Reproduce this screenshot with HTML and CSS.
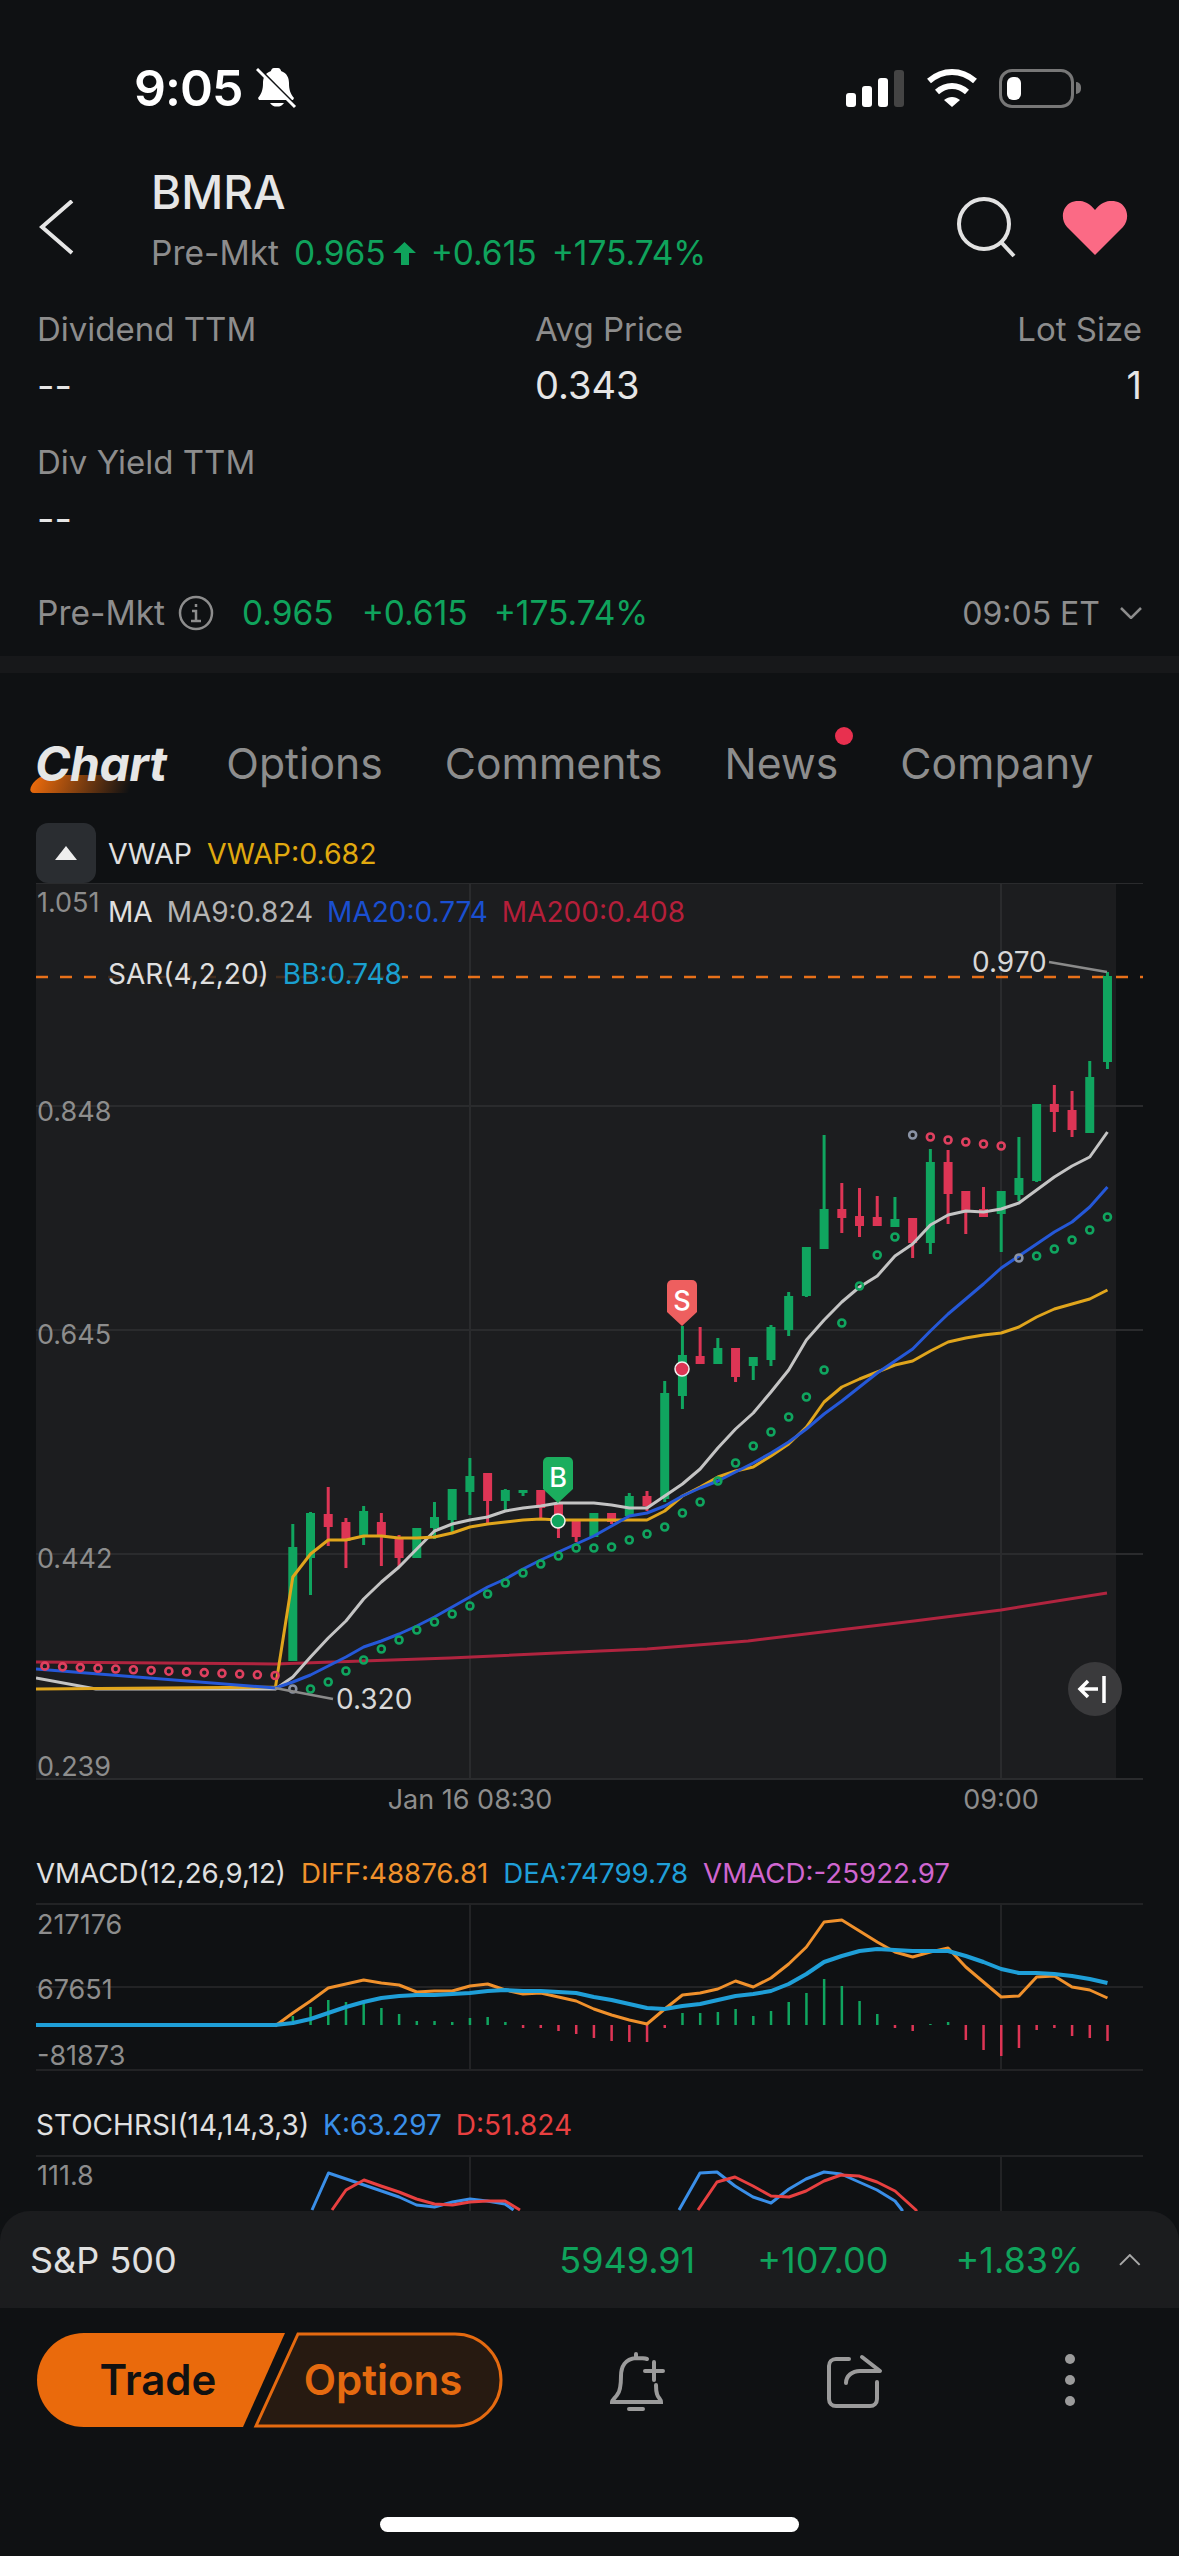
FILE: index.html
```html
<!DOCTYPE html>
<html>
<head>
  <meta charset="utf-8">
  <title>BMRA</title>
  <link rel="stylesheet" href="styles.css">
</head>
<body>
  <div id="screen">
    <div class="status">
      <div class="status-left">
        <span class="clock">9:05</span>
        <svg class="status-bell" viewBox="255 66 42 44">
          <path d="M273 68c-2 0-3 2-3 3-6 2-8 7-8 12 0 6-1 10-5 15l1 2h34l1-2c-4-5-5-9-5-15 0-5-2-10-8-12 0-1-1-3-3-3h-4z" fill="#fff"/>
          <path d="M267 103a8 7 0 0 0 14 0z" fill="#fff" transform="translate(2 0)"/>
          <path d="M254 65l40 40" stroke="#0f1113" stroke-width="3"/>
          <path d="M256 69l38 38" stroke="#fff" stroke-width="3"/>
        </svg>
      </div>
      <div class="status-right">
        <div class="signal">
          <i class="bar-1"></i><i class="bar-2"></i><i class="bar-3"></i><i class="bar-4"></i>
        </div>
        <svg class="wifi" viewBox="925 68 54 40">
          <path d="M929 81c14-12 32-12 46 0M937 92c9-8 21-8 30 0" fill="none" stroke="#fff" stroke-width="6"/>
          <path d="M944 100c5-4 11-4 16 0l-8 7z" fill="#fff"/>
        </svg>
        <div class="battery"><div class="battery-fill"></div></div>
        <div class="battery-nub"></div>
      </div>
    </div>

    <div class="header">
      <svg class="back" viewBox="0 0 35 55"><path d="M33 1L3 27l30 26" fill="none" stroke="#e6e6e6" stroke-width="4"/></svg>
      <div class="title">
        <div class="symbol">BMRA</div>
        <div class="quote">
          <span class="muted">Pre-Mkt</span>
          <span class="up q-price">0.965</span>
          <svg class="up-arrow" viewBox="0 0 23 23"><path d="M11.5 0L23 11h-7v12H8V11H0z" fill="#0fa35c"/></svg>
          <span class="up q-chg">+0.615</span>
          <span class="up">+175.74%</span>
        </div>
      </div>
      <svg class="search" viewBox="0 0 60 62">
        <circle cx="27" cy="27" r="25" fill="none" stroke="#e2e2e2" stroke-width="4"/>
        <path d="M44 45l13 14" stroke="#e2e2e2" stroke-width="4"/>
      </svg>
      <svg class="heart" viewBox="0 0 66 54">
        <path d="M33 54L5 26C-2 18 0 5 10 1c8-3 17 0 23 8 6-8 15-11 23-8 10 4 12 17 5 25z" fill="#fb6a85"/>
      </svg>
    </div>

    <div class="stats">
      <div class="stat">
        <div class="stat-label">Dividend TTM</div>
        <div class="stat-value">--</div>
      </div>
      <div class="stat">
        <div class="stat-label">Avg Price</div>
        <div class="stat-value">0.343</div>
      </div>
      <div class="stat stat-right">
        <div class="stat-label">Lot Size</div>
        <div class="stat-value">1</div>
      </div>
      <div class="stat">
        <div class="stat-label">Div Yield TTM</div>
        <div class="stat-value">--</div>
      </div>
    </div>

    <div class="premkt">
      <span class="muted">Pre-Mkt</span>
      <svg class="info" viewBox="0 0 36 36">
        <circle cx="18" cy="18" r="16" fill="none" stroke="#8d8d8d" stroke-width="2.5"/>
        <path d="M18 9v3M14 16h4v10M13 26h10" fill="none" stroke="#8d8d8d" stroke-width="2.5"/>
      </svg>
      <span class="up p-price">0.965</span>
      <span class="up p-chg">+0.615</span>
      <span class="up p-pct">+175.74%</span>
      <span class="muted p-time">09:05 ET</span>
      <svg class="p-chevron" viewBox="0 0 22 12"><path d="M1 1l10 10L21 1" fill="none" stroke="#8d8d8d" stroke-width="2.5"/></svg>
    </div>

    <div class="band"></div>

    <div class="tabs">
      <span class="tab tab-active">Chart</span>
      <span class="tab">Options</span>
      <span class="tab">Comments</span>
      <span class="tab tab-news">News</span>
      <span class="tab">Company</span>
    </div>

    <div class="legend-top">
      <div class="collapse"><div class="collapse-tri"></div></div>
      <span class="lg-name">VWAP</span>
      <span class="c-vwap">VWAP:0.682</span>
    </div>

    <div class="plot">
      <svg id="main-chart" class="chart-svg" width="1107" height="936" viewBox="36 884 1107 936">
        <rect x="36" y="884" width="1080" height="896" fill="#1c1d1f"/>
        <g stroke="#2a2b2d" stroke-width="2">
          <path d="M36 884H1143M36 1107H1143M36 1331H1143M36 1555H1143M36 1780H1143M470 884V1780M1001 884V1780"/>
        </g>
        <path d="M36 978H1143" stroke="#e8711a" stroke-width="2.5" stroke-dasharray="12 12"/>
        <g id="main-series"></g>
        <g class="axis-text">
          <text x="37" y="913">1.051</text>
          <text x="37" y="1122">0.848</text>
          <text x="37" y="1345">0.645</text>
          <text x="37" y="1569">0.442</text>
          <text x="37" y="1777">0.239</text>
          <text x="470" y="1810" text-anchor="middle">Jan 16 08:30</text>
          <text x="1001" y="1810" text-anchor="middle">09:00</text>
        </g>
        <path d="M1107 973L1049 963M275 1689L333 1700" stroke="#8a8a8a" stroke-width="2.5" fill="none"/>
        <g class="price-text">
          <text x="972" y="973">0.970</text>
          <text x="336" y="1710">0.320</text>
        </g>
      </svg>
      <div class="legend-over">
        <div class="lg-row"><span class="lg-name">MA</span><span class="c-ma9">MA9:0.824</span><span class="c-ma20">MA20:0.774</span><span class="c-ma200">MA200:0.408</span></div>
        <div class="lg-row lg-row-bg"><span class="lg-name">SAR(4,2,20)</span><span class="c-bb">BB:0.748</span></div>
      </div>
      <div class="jump">
        <svg viewBox="0 0 54 54"><path d="M30 27H12M20 19l-8 8 8 8" fill="none" stroke="#fff" stroke-width="3.5"/><path d="M36 14v27" stroke="#fff" stroke-width="3.5"/></svg>
      </div>
    </div>

    <div class="legend-sub">
      <span class="lg-name">VMACD(12,26,9,12)</span>
      <span class="c-diff">DIFF:48876.81</span>
      <span class="c-dea">DEA:74799.78</span>
      <span class="c-vmacd">VMACD:-25922.97</span>
    </div>
    <svg class="panel panel-vmacd" width="1107" height="168" viewBox="36 1904 1107 168">
      <path d="M36 1905H1143M36 1988H1143M36 2071H1143M470 1904V2072M1001 1904V2072" stroke="#222325" stroke-width="2"/>
      <g id="vmacd-series"></g>
      <g class="axis-text">
        <text x="37" y="1935">217176</text>
        <text x="37" y="2000">67651</text>
        <text x="37" y="2066">-81873</text>
      </g>
    </svg>

    <div class="legend-sub legend-stoch">
      <span class="lg-name">STOCHRSI(14,14,3,3)</span>
      <span class="c-k">K:63.297</span>
      <span class="c-d">D:51.824</span>
    </div>
    <svg class="panel panel-stoch" width="1107" height="100" viewBox="36 2156 1107 100">
      <path d="M36 2157H1143M470 2156V2256M1001 2156V2256" stroke="#222325" stroke-width="2"/>
      <g id="stoch-series"></g>
      <g class="axis-text"><text x="37" y="2186">111.8</text></g>
    </svg>

    <div class="dock">
      <div class="ticker">
        <span class="tk-name">S&amp;P 500</span>
        <span class="up tk-price">5949.91</span>
        <span class="up tk-chg">+107.00</span>
        <span class="up tk-pct">+1.83%</span>
        <svg class="tk-chevron" viewBox="0 0 22 12"><path d="M1 11L11 1l10 10" fill="none" stroke="#a8a8a8" stroke-width="2"/></svg>
      </div>
      <div class="actions">
        <svg class="trade-pair" width="468" height="96" viewBox="36 2332 468 96">
          <path d="M84 2333H285L243 2427H84a47 47 0 0 1 0-94z" fill="#ea6a0c"/>
          <path d="M298 2334H455a46 46 0 0 1 0 92H256z" fill="#271a11" stroke="#e56a10" stroke-width="3"/>
          <text class="trade-text" x="158" y="2395" text-anchor="middle">Trade</text>
          <text class="options-text" x="383" y="2395" text-anchor="middle">Options</text>
        </svg>
        <svg class="act-icon act-bell" viewBox="608 2350 60 64">
          <path d="M636 2354v4M647 2359c-3-1-7-1-11-1-11 1-15 9-15 18 0 6 0 15-4 19-2 3-5 5-5 7h49c0-3-3-4-4-8-1-3-1-6-1-9M645 2371h18M654 2362v18M629 2409h14" fill="none" stroke="#9b9b9b" stroke-width="4" stroke-linecap="round"/>
        </svg>
        <svg class="act-icon act-share" viewBox="824 2352 60 60">
          <path d="M849 2359h-13c-4 0-7 3-7 7v33c0 4 3 7 7 7h34c4 0 7-3 7-7v-17M862 2357l18 14h-20c-8 0-14 5-14 12" fill="none" stroke="#9b9b9b" stroke-width="4" stroke-linecap="round" stroke-linejoin="round"/>
        </svg>
        <div class="act-more"><i></i><i></i><i></i></div>
      </div>
      <div class="home-bar"></div>
    </div>
  </div>
  <script src="chart.js"></script>
</body>
</html>
```

FILE: styles.css
```css
:root {
  --font-family: Inter, sans-serif;
  --bg: #0f1113;
  --muted: #8d8d8d;
  --up: #0fa35c;
}
html, body {
  margin: 0;
  background: var(--bg);
}
#screen {
  position: relative;
  width: 1179px;
  height: 2556px;
  overflow: hidden;
  font-family: var(--font-family);
  background: var(--bg);
  color: #e6e6e6;
}
.up {
  color: var(--up);
}
.muted {
  color: var(--muted);
}

/* status bar */
.status {
  display: flex;
  justify-content: space-between;
  box-sizing: border-box;
  height: 170px;
  padding: 64px 98px 0 134px;
}
.status-left, .status-right {
  display: flex;
  align-items: center;
  height: 48px;
}
.clock {
  font-size: 50px;
  font-weight: 600;
  color: #fff;
  letter-spacing: -1px;
}
.status-bell {
  width: 42px;
  height: 44px;
  margin-left: 14px;
}
.signal {
  display: flex;
  align-items: flex-end;
  gap: 6px;
  height: 37px;
}
.signal i {
  display: block;
  width: 10px;
  border-radius: 3px;
  background: #fff;
}
.bar-1 { height: 14px; }
.bar-2 { height: 21px; }
.bar-3 { height: 29px; }
.bar-4 { height: 37px; background: #444 !important; }
.wifi {
  width: 54px;
  height: 40px;
  margin-left: 21px;
}
.battery {
  box-sizing: border-box;
  width: 75px;
  height: 39px;
  margin-left: 20px;
  padding: 5px;
  border: 3px solid #777;
  border-radius: 13px;
}
.battery-fill {
  width: 14px;
  height: 23px;
  border-radius: 6px;
  background: #fff;
}
.battery-nub {
  width: 5px;
  height: 12px;
  margin-left: 2px;
  border-radius: 0 6px 6px 0;
  background: #777;
}

/* symbol header */
.header {
  display: flex;
  height: 103px;
  padding-left: 39px;
}
.back {
  width: 35px;
  height: 55px;
  margin-top: 30px;
}
.title {
  width: 806px;
  margin-left: 77px;
}
.symbol {
  font-size: 46px;
  font-weight: 500;
  line-height: 44px;
}
.quote {
  display: flex;
  align-items: center;
  height: 40px;
  margin-top: 19px;
  font-size: 33.5px;
}
.q-price { margin-left: 15px; }
.up-arrow {
  width: 23px;
  height: 23px;
  margin-left: 7px;
}
.q-chg { margin: 0 15px; }
.search {
  width: 60px;
  height: 62px;
  margin-top: 27px;
}
.heart {
  width: 66px;
  height: 54px;
  margin: 31px 0 0 45px;
}

/* stats grid */
.stats {
  display: grid;
  grid-template-columns: 498px 1fr auto;
  row-gap: 35px;
  margin-top: 36px;
  padding: 0 37px;
}
.stat-label {
  font-size: 33px;
  line-height: 40px;
  color: var(--muted);
}
.stat-value {
  margin-top: 14px;
  font-size: 38px;
  line-height: 44px;
}
.stat-right {
  text-align: right;
}

/* pre market row */
.premkt {
  display: flex;
  align-items: center;
  height: 40px;
  margin-top: 53px;
  padding: 0 37px;
  font-size: 33.5px;
}
.info {
  width: 36px;
  height: 36px;
  margin-left: 13px;
}
.p-price { margin-left: 28px; }
.p-chg { margin-left: 28px; }
.p-pct { margin-left: 26px; }
.p-time {
  margin-left: auto;
  font-size: 32px;
}
.p-chevron {
  width: 22px;
  height: 12px;
  margin-left: 20px;
}
.band {
  height: 17px;
  margin-top: 23px;
  background: #17181a;
}

/* tabs */
.tabs {
  display: flex;
  gap: 62px;
  height: 56px;
  margin-top: 63px;
  padding-left: 35px;
  font-size: 42.7px;
  line-height: 56px;
  color: var(--muted);
}
.tab {
  position: relative;
  z-index: 0;
}
.tab-active {
  margin-right: -2px;
  font-size: 48px;
  font-weight: 700;
  font-style: italic;
  letter-spacing: -0.5px;
  color: #e6e6e6;
}
.tab-active::before {
  content: "";
  position: absolute;
  z-index: -1;
  left: -3px;
  bottom: -1px;
  width: 100px;
  height: 18px;
  border-radius: 14px 0 0 6px;
  transform: skewX(-20deg);
  background: linear-gradient(90deg, #ea6a0c, rgba(234, 106, 12, 0));
}
.tab-news::after {
  content: "";
  position: absolute;
  top: -9px;
  right: -15px;
  width: 18px;
  height: 18px;
  border-radius: 50%;
  background: #e8304f;
}

/* legends */
.legend-top {
  display: flex;
  align-items: center;
  gap: 15px;
  height: 60px;
  margin-top: 31px;
  padding-left: 36px;
  font-size: 28.5px;
}
.collapse {
  display: flex;
  align-items: center;
  justify-content: center;
  width: 60px;
  height: 60px;
  margin-right: -3px;
  border-radius: 12px;
  background: #2a2d31;
}
.collapse-tri {
  width: 0;
  height: 0;
  border-left: 11px solid transparent;
  border-right: 11px solid transparent;
  border-bottom: 14px solid #eee;
}
.lg-name { color: #e0e0e0; }
.c-vwap { color: #e0a90f; }
.c-ma9 { color: #b4b4b4; }
.c-ma20 { color: #1a4fd0; }
.c-ma200 { color: #b51f3a; }
.c-bb { color: #1aa0d0; }
.c-diff { color: #f0912c; }
.c-dea { color: #1f9fd8; }
.c-vmacd { color: #d066d0; }
.c-k { color: #3a8fe8; }
.c-d { color: #e84040; }

/* main chart */
.plot {
  position: relative;
  height: 936px;
  margin-left: 36px;
}
.chart-svg, .panel {
  display: block;
}
.axis-text text {
  font-family: var(--font-family);
  font-size: 27px;
  fill: #8d8d8d;
}
.price-text text {
  font-family: var(--font-family);
  font-size: 28px;
  fill: #d8d8d8;
}
.marker-text {
  font-family: var(--font-family);
  font-size: 27px;
  font-weight: 500;
  fill: #fff;
  text-anchor: middle;
}
.legend-over {
  position: absolute;
  top: 11px;
  left: 72px;
  font-size: 28px;
}
.lg-row {
  display: flex;
  gap: 14px;
  width: fit-content;
  height: 36px;
  line-height: 36px;
  margin-bottom: 26px;
}
.lg-row-bg {
  background: rgba(28, 29, 31, 0.82);
}
.jump {
  position: absolute;
  top: 779px;
  left: 1032px;
  width: 54px;
  height: 54px;
  border-radius: 50%;
  background: #3a3a3c;
}
.jump svg {
  display: block;
}

/* indicator panels */
.legend-sub {
  display: flex;
  gap: 15px;
  height: 36px;
  margin-top: 36px;
  padding-left: 36px;
  font-size: 27.7px;
  line-height: 36px;
}
.legend-stoch {
  gap: 14px;
  font-size: 28px;
}
.panel {
  margin: 12px 0 0 36px;
}

/* bottom dock */
.dock {
  position: absolute;
  left: 0;
  bottom: 0;
  width: 1179px;
  height: 345px;
  background: var(--bg);
}
.ticker {
  display: flex;
  align-items: center;
  box-sizing: border-box;
  height: 97px;
  padding: 0 38px 0 30px;
  border-radius: 30px 30px 0 0;
  background: #1b1c1e;
  font-size: 36px;
}
.tk-name {
  width: 539px;
  color: #e0e0e0;
}
.tk-chg { margin-left: 62px; }
.tk-pct { margin-left: 67px; }
.tk-chevron {
  width: 22px;
  height: 12px;
  margin-left: 36px;
}
.actions {
  position: relative;
  height: 130px;
}
.trade-pair {
  position: absolute;
  left: 36px;
  top: 24px;
}
.trade-text, .options-text {
  font-family: var(--font-family);
  font-size: 42px;
  font-weight: 600;
}
.trade-text { fill: #111; }
.options-text { fill: #e56a10; }
.act-icon {
  position: absolute;
  width: 60px;
  height: 60px;
}
.act-bell {
  left: 608px;
  top: 42px;
  height: 64px;
}
.act-share {
  left: 824px;
  top: 44px;
}
.act-more {
  position: absolute;
  left: 1065px;
  top: 46px;
  display: flex;
  flex-direction: column;
  gap: 11px;
}
.act-more i {
  display: block;
  width: 10px;
  height: 10px;
  border-radius: 50%;
  background: #9b9b9b;
}
.home-bar {
  width: 419px;
  height: 15px;
  margin: 79px auto 0;
  border-radius: 8px;
  background: #fff;
}
```

FILE: chart.js
```js
// Draws the candles, averages and indicators into the inline svg groups.
var SVGNS = "http://www.w3.org/2000/svg";
var GREEN = "#10a55f";
var RED = "#dd3555";

function barX(i) {
  return 292.8 + 17.71 * i;
}

function add(parent, tag, attrs) {
  var el = document.createElementNS(SVGNS, tag);
  for (var k in attrs) el.setAttribute(k, attrs[k]);
  parent.appendChild(el);
  return el;
}

function line(parent, pts, color, width) {
  add(parent, "polyline", {
    points: pts.map(function (p) { return p[0] + "," + p[1]; }).join(" "),
    fill: "none", stroke: color, "stroke-width": width, "stroke-linejoin": "round"
  });
}

// y values indexed by bar, with optional lead-in points on the left
function series(lead, ys) {
  return lead.concat(ys.map(function (y, i) { return [barX(i), y]; }));
}

// wick top, body top, body bottom, wick bottom, colour
var candles = [
  [1525,1548,1662,1662,"g"],[1513,1514,1559,1596,"g"],[1488,1515,1528,1547,"r"],[1519,1523,1542,1569,"r"],
  [1507,1512,1537,1546,"g"],[1514,1523,1537,1567,"r"],[1536,1538,1559,1568,"r"],[1529,1529,1559,1559,"g"],
  [1503,1518,1529,1540,"g"],[1490,1490,1521,1533,"g"],[1459,1477,1493,1516,"g"],[1474,1474,1502,1524,"r"],
  [1490,1491,1502,1511,"g"],[1491,1491,1494,1497,"g"],[1491,1491,1509,1519,"r"],[1500,1505,1527,1539,"r"],
  [1520,1520,1538,1543,"r"],[1514,1514,1538,1538,"g"],[1514,1514,1523,1525,"r"],[1494,1497,1517,1517,"g"],
  [1492,1497,1507,1512,"r"],[1382,1394,1500,1503,"g"],[1327,1356,1397,1410,"g"],[1328,1357,1365,1365,"r"],
  [1339,1349,1365,1365,"g"],[1349,1349,1378,1383,"r"],[1358,1358,1367,1381,"g"],[1326,1328,1361,1367,"g"],
  [1293,1297,1331,1337,"g"],[1248,1248,1297,1298,"g"],[1136,1210,1250,1250,"g"],[1184,1210,1219,1234,"r"],
  [1189,1217,1227,1238,"r"],[1197,1218,1227,1227,"r"],[1198,1220,1228,1228,"g"],[1219,1219,1244,1259,"r"],
  [1150,1163,1244,1255,"g"],[1151,1163,1195,1225,"r"],[1192,1192,1212,1235,"r"],[1188,1210,1218,1218,"r"],
  [1192,1192,1215,1253,"g"],[1138,1179,1196,1202,"g"],[1105,1105,1182,1183,"g"],[1086,1105,1113,1133,"r"],
  [1092,1111,1131,1138,"r"],[1062,1078,1134,1134,"g"],[973,977,1063,1070,"g"]
];

var ma200 = [[36,1663],[275,1665],[450,1659],[600,1652],[647,1650],[748,1642],[914,1622],[1001,1611],[1107,1594]];

var vwap = series([[36,1690],[275.5,1688]], [
  1578,1555,1541,1541,1537,1537,1539,1539,1538,1534,1528,1525,1523,1521,1520,1521,1521,1521,1521,1521,1521,
  1512,1497,1488,1478,1472,1468,1457,1445,1428,1403,1388,1380,1373,1366,1362,1352,1343,1339,1336,1334,
  1328,1318,1310,1305,1300,1291
]);

var ma20 = series([[36,1670],[275.5,1689]], [
  1683,1676,1667,1658,1648,1642,1635,1627,1618,1608,1598,1588,1580,1570,1561,1553,1545,1537,1527,1517,1514,
  1507,1497,1489,1482,1473,1464,1454,1443,1430,1415,1402,1388,1374,1362,1350,1332,1315,1300,1285,1269,
  1257,1245,1233,1223,1208,1188
]);

var ma9 = series([[36,1679],[96,1690],[275.5,1690]], [
  1678,1658,1639,1622,1600,1583,1568,1550,1532,1525,1521,1518,1512,1509,1507,1504,1504,1504,1506,1509,1509,
  1497,1485,1470,1449,1430,1414,1393,1371,1341,1321,1303,1288,1277,1257,1245,1226,1216,1212,1213,1210,
  1204,1191,1178,1167,1158,1133
]);

// parabolic dots left of the first session bar
var sarLead = [];
for (var k = 14; k >= 1; k--) {
  sarLead.push([barX(-k), 1676.5 - (k - 1) * 0.72, RED]);
}

var sarUp = [
  1690,1690,1683,1672,1661,1650,1641,1631,1623,1615,1607,1595,1584,1574,1565,1557,1549,1549,1548,1541,1535,
  1528,1514,1503,1482,1464,1447,1433,1418,1398,1371,1324,1287,1256,1238,1136,1138,1141,1143,1145,1147,
  1259,1257,1250,1241,1231,1218
];

var diff = series([[275.1,2027]], [
  2014,2002,1989,1985,1981,1984,1986,1993,1992,1992,1987,1985,1991,1995,1994,1998,2002,2010,2016,2021,2025,
  2010,1996,1994,1990,1982,1988,1979,1965,1948,1923,1921,1932,1943,1953,1958,1953,1949,1968,1983,1998,
  1997,1978,1977,1988,1991,1999
]);
var dea = series([[36,2026],[275.1,2026]], [
  2024,2020,2014,2008,2003,1999,1997,1996,1996,1995,1994,1992,1991,1992,1992,1993,1994,1998,2001,2005,2009,
  2010,2007,2005,2001,1997,1995,1992,1985,1975,1963,1957,1952,1950,1951,1952,1952,1952,1957,1963,1970,
  1974,1974,1975,1977,1980,1984
]);
var hist = [
  2017,2008,2001,2003,2004,2009,2015,2022,2022,2023,2019,2018,2023,2029,2029,2032,2035,2039,2042,2043,2043,
  2029,2014,2014,2013,2010,2017,2012,2003,1994,1980,1987,2002,2015,2029,2032,2025,2023,2041,2051,2057,
  2049,2031,2029,2037,2039,2042
];

var stochK = [
  [[312,2211],[328.5,2174],[364,2186],[399,2198],[416.5,2206],[434.5,2208],[452.5,2203],[470,2200],[487,2202],[505,2205],[513.5,2211]],
  [[679,2211],[700,2174],[717,2173],[735,2187],[753,2198],[771,2204],[789,2190],[806,2180],[824,2173],[841,2175],[859,2183],[877,2191],[895,2202],[902,2211],[906,2250]]
];
var stochD = [
  [[332,2211],[346,2191],[364,2181],[381,2187],[399,2193],[416.5,2200],[434.5,2205],[452.5,2206],[470,2203],[487,2202],[505,2202],[520,2211]],
  [[698,2211],[717,2183],[735,2178],[753,2187],[771,2197],[789,2198],[806,2192],[824,2182],[841,2176],[859,2177],[877,2183],[895,2192],[916,2211],[926,2250]]
];

function drawMain() {
  var g = document.getElementById("main-series");
  candles.forEach(function (c, i) {
    var color = c[4] == "g" ? GREEN : RED;
    var x = barX(i);
    add(g, "rect", { x: x - 1.5, y: c[0], width: 3, height: c[3] - c[0], fill: color });
    add(g, "rect", { x: x - 4.5, y: c[1], width: 9, height: c[2] - c[1], fill: color });
  });
  line(g, ma200, "#b0243f", 3);
  line(g, ma9, "#c4c4c4", 3);
  line(g, vwap, "#e0a51c", 3);
  line(g, ma20, "#2558d8", 3);

  sarLead.forEach(function (d) {
    add(g, "circle", { cx: d[0], cy: d[1], r: 3.5, fill: "none", stroke: "#e0405f", "stroke-width": 2.6 });
  });
  sarUp.forEach(function (y, i) {
    var color = GREEN;
    if (i == 0 || i == 35 || i == 41) color = "#8a93a5";
    else if (i >= 36 && i <= 40) color = "#e0405f";
    add(g, "circle", { cx: barX(i), cy: y, r: 3.5, fill: "none", stroke: color, "stroke-width": 2.6 });
  });

  drawMarker(g, 558, 1458, "B", "#1bae5e", 1522, GREEN);
  drawMarker(g, 682, 1281, "S", "#ee5f5f", 1370, RED);
}

function drawMarker(g, x, top, label, color, dotY, dotColor) {
  var d = "M" + (x - 10) + " " + top + "h20a5 5 0 0 1 5 5v27l-15 14-15-14v-27a5 5 0 0 1 5-5z";
  add(g, "path", { d: d, fill: color });
  add(g, "text", { x: x, y: top + 30, "class": "marker-text" }).textContent = label;
  add(g, "circle", { cx: x, cy: dotY, r: 7, fill: dotColor, stroke: "#f0f0f0", "stroke-width": 1.5 });
}

function drawVmacd() {
  var g = document.getElementById("vmacd-series");
  for (var k = 14; k >= 1; k--) {
    add(g, "rect", { x: barX(-k) - 1, y: 2025, width: 2, height: 3, fill: RED });
  }
  hist.forEach(function (y, i) {
    var up = y < 2026;
    add(g, "rect", { x: barX(i) - 1.2, y: up ? y : 2026, width: 2.5, height: Math.abs(y - 2026), fill: up ? GREEN : RED });
  });
  line(g, diff, "#f0912c", 3);
  line(g, dea, "#1f9fd8", 4);
}

function drawStoch() {
  var g = document.getElementById("stoch-series");
  stochK.forEach(function (pts) { line(g, pts, "#3a8fe8", 3); });
  stochD.forEach(function (pts) { line(g, pts, "#e84040", 3); });
}

drawMain();
drawVmacd();
drawStoch();
```
